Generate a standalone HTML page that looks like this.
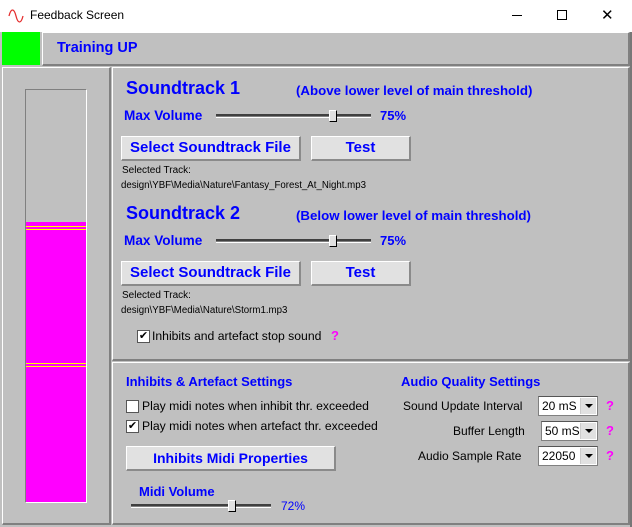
<!DOCTYPE html>
<html><head><meta charset="utf-8"><style>
*{margin:0;padding:0;box-sizing:border-box}
body{width:632px;height:527px;background:#c0c0c0;position:relative;overflow:hidden;font-family:"Liberation Sans",Arial,sans-serif}
.a{position:absolute}
.b{color:#0000ff;font-weight:bold;white-space:nowrap}
.t{color:#000;font-size:11px;white-space:nowrap}
.panel{border-top:1px solid #fff;border-left:1px solid #fff;border-right:2px solid #808080;border-bottom:2px solid #808080}
.btn{background:#e1e1e1;border-top:1px solid #fff;border-left:1px solid #fff;border-right:2px solid #8a8a8a;border-bottom:2px solid #8a8a8a;color:#0000ff;font-weight:bold;font-size:15px;text-align:center}
.track{height:4px;border-top:2px solid #404040;border-bottom:1px solid #fff;background:#808080}
.thumb{width:8px;height:12px;background:#e0e0e0;border-top:1px solid #fff;border-left:1px solid #fff;border-right:1px solid #000;border-bottom:1px solid #000}
.cb{width:13px;height:13px;background:#fff;border:1px solid #555;font-size:11px;line-height:11px;text-align:center;color:#000}
.q{color:#ff00ff;font-weight:bold;font-size:13px}
.sel{height:20px;background:#fff;border:1px solid #808080;border-top-color:#555;font-size:12px;padding-left:3px;line-height:18px;color:#000}
.sel i{position:absolute;right:1px;top:1px;width:16px;height:16px;background:#e1e1e1;border-left:1px solid #ccc}
.sel i:after{content:"";position:absolute;left:4px;top:6px;border-left:4px solid transparent;border-right:4px solid transparent;border-top:4px solid #000}
</style></head><body>
<!-- title bar -->
<div class="a" style="left:0;top:0;width:632px;height:32px;background:#fff"></div>
<svg class="a" style="left:8px;top:8px" width="18" height="16"><path d="M1 8 C3 0,6 0,8 8 S13 16,15 8" fill="none" stroke="#e53030" stroke-width="1.3"/></svg>
<div class="a t" style="left:30px;top:8px;font-size:12px">Feedback Screen</div>
<div class="a" style="left:512px;top:15px;width:10px;height:1px;background:#000"></div>
<div class="a" style="left:557px;top:10px;width:10px;height:10px;border:1px solid #000"></div>
<div class="a" style="left:601px;top:9px;font-size:15px;color:#000;line-height:13px">✕</div>
<div class="a" style="left:630px;top:32px;width:2px;height:495px;background:#777"></div>
<!-- header -->
<div class="a" style="left:2px;top:32px;width:38px;height:33px;background:#00ff00"></div>
<div class="a panel" style="left:42px;top:32px;width:588px;height:34px"></div>
<div class="a b" style="left:57px;top:40px;font-size:14.5px">Training UP</div>
<!-- left panel -->
<div class="a panel" style="left:2px;top:67px;width:109px;height:458px"></div>
<div class="a" style="left:25px;top:89px;width:62px;height:414px;border:1px solid #fff;border-top-color:#808080;border-left-color:#808080"></div>
<div class="a" style="left:26px;top:222px;width:60px;height:280px;background:#ff00ff"></div>
<div class="a" style="left:26px;top:226px;width:60px;height:4px;border-top:1px solid #ff0;border-bottom:1px solid #ff0"></div>
<div class="a" style="left:26px;top:363px;width:60px;height:4px;border-top:1px solid #ff0;border-bottom:1px solid #ff0"></div>
<!-- right top -->
<div class="a panel" style="left:112px;top:67px;width:518px;height:294px"></div>
<div class="a b" style="left:126px;top:78px;font-size:18px">Soundtrack 1</div>
<div class="a b" style="left:296px;top:83px;font-size:13.3px">(Above lower level of main threshold)</div>
<div class="a b" style="left:124px;top:108px;font-size:13.6px">Max Volume</div>
<div class="a track" style="left:216px;top:114px;width:155px"></div>
<div class="a thumb" style="left:329px;top:110px"></div>
<div class="a b" style="left:380px;top:108px;font-size:13px">75%</div>
<div class="a btn" style="left:121px;top:136px;width:180px;height:25px;line-height:22px">Select Soundtrack File</div>
<div class="a btn" style="left:311px;top:136px;width:100px;height:25px;line-height:22px">Test</div>
<div class="a t" style="left:122px;top:165px;font-size:10px">Selected Track:</div>
<div class="a t" style="left:121px;top:180px;font-size:9.7px">design\YBF\Media\Nature\Fantasy_Forest_At_Night.mp3</div>

<div class="a b" style="left:126px;top:203px;font-size:18px">Soundtrack 2</div>
<div class="a b" style="left:296px;top:208px;font-size:13.3px">(Below lower level of main threshold)</div>
<div class="a b" style="left:124px;top:233px;font-size:13.6px">Max Volume</div>
<div class="a track" style="left:216px;top:239px;width:155px"></div>
<div class="a thumb" style="left:329px;top:235px"></div>
<div class="a b" style="left:380px;top:233px;font-size:13px">75%</div>
<div class="a btn" style="left:121px;top:261px;width:180px;height:25px;line-height:22px">Select Soundtrack File</div>
<div class="a btn" style="left:311px;top:261px;width:100px;height:25px;line-height:22px">Test</div>
<div class="a t" style="left:122px;top:290px;font-size:10px">Selected Track:</div>
<div class="a t" style="left:121px;top:305px;font-size:9.7px">design\YBF\Media\Nature\Storm1.mp3</div>
<div class="a cb" style="left:137px;top:330px">✔</div>
<div class="a t" style="left:152px;top:329px;font-size:12.2px">Inhibits and artefact stop sound</div>
<div class="a q" style="left:331px;top:328px">?</div>
<!-- bottom -->
<div class="a panel" style="left:112px;top:362px;width:518px;height:163px"></div>
<div class="a b" style="left:126px;top:374px;font-size:13px">Inhibits &amp; Artefact Settings</div>
<div class="a cb" style="left:126px;top:400px"></div>
<div class="a t" style="left:142px;top:399px;font-size:12.2px">Play midi notes when inhibit thr. exceeded</div>
<div class="a cb" style="left:126px;top:420px">✔</div>
<div class="a t" style="left:142px;top:419px;font-size:12.2px">Play midi notes when artefact thr. exceeded</div>
<div class="a btn" style="left:126px;top:446px;width:210px;height:25px;line-height:22px;font-size:14px">Inhibits Midi Properties</div>
<div class="a b" style="left:139px;top:484px;font-size:13px">Midi Volume</div>
<div class="a track" style="left:131px;top:504px;width:140px"></div>
<div class="a thumb" style="left:228px;top:500px"></div>
<div class="a b" style="left:281px;top:499px;font-size:12px;font-weight:normal">72%</div>

<div class="a b" style="left:401px;top:374px;font-size:13px">Audio Quality Settings</div>
<div class="a t" style="left:403px;top:399px;font-size:12px">Sound Update Interval</div>
<div class="a sel" style="left:538px;top:396px;width:60px">20 mS<i></i></div>
<div class="a q" style="left:606px;top:398px">?</div>
<div class="a t" style="left:453px;top:424px;font-size:12px">Buffer Length</div>
<div class="a sel" style="left:541px;top:421px;width:57px">50 mS<i></i></div>
<div class="a q" style="left:606px;top:423px">?</div>
<div class="a t" style="left:418px;top:449px;font-size:12px">Audio Sample Rate</div>
<div class="a sel" style="left:538px;top:446px;width:60px">22050<i></i></div>
<div class="a q" style="left:606px;top:448px">?</div>
</body></html>
